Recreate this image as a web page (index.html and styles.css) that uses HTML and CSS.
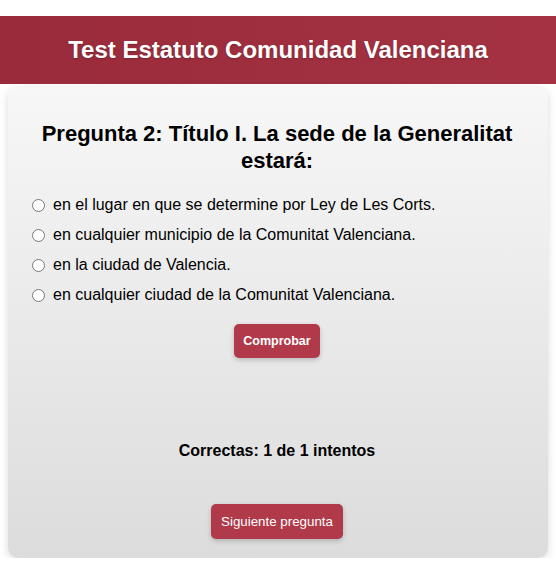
FILE: index.html
```html
<!DOCTYPE html>
<html lang="es">
<head>
<meta charset="utf-8">
<title>Test Estatuto Comunidad Valenciana</title>
<link rel="stylesheet" href="styles.css">
</head>
<body>
<header class="site-header">
  <h1 class="site-title">Test Estatuto Comunidad Valenciana</h1>
</header>
<main class="wrap">
  <section class="card">
    <h2 class="question">Pregunta 2: Título I. La sede de la Generalitat estará:</h2>
    <form class="options">
      <label class="option"><input type="radio" name="r"> en el lugar en que se determine por Ley de Les Corts.</label>
      <label class="option"><input type="radio" name="r"> en cualquier municipio de la Comunitat Valenciana.</label>
      <label class="option"><input type="radio" name="r"> en la ciudad de Valencia.</label>
      <label class="option"><input type="radio" name="r"> en cualquier ciudad de la Comunitat Valenciana.</label>
    </form>
    <button class="btn btn-check" type="button">Comprobar</button>
    <div class="feedback"></div>
    <p class="score">Correctas: 1 de 1 intentos</p>
    <button class="btn btn-next" type="button">Siguiente pregunta</button>
  </section>
</main>
</body>
</html>
```
FILE: styles.css
```css
html, body {
  margin: 0;
  padding: 0;
  background: #ffffff;
  font-family: "Liberation Sans", Arial, sans-serif;
  color: #000;
}
.site-header {
  margin-top: 16px;
  height: 68px;
  background: linear-gradient(90deg, #9a2b3b, #a43242);
  display: flex;
  align-items: center;
  justify-content: center;
}
.site-title {
  margin: 0;
  color: #fff;
  font-size: 24px;
  font-weight: bold;
  text-shadow: 0 1px 2px rgba(0,0,0,0.25);
}
.wrap {
  padding: 3px 8px 0;
}
.card {
  background: linear-gradient(180deg, #f7f7f7, #dcdcdc);
  border-radius: 10px;
  box-shadow: 0 2px 8px rgba(0,0,0,0.15);
  padding: 33px 25px 19px 23px;
  display: flex;
  flex-direction: column;
  align-items: center;
  height: 471px;
  box-sizing: border-box;
}
.question {
  margin: 0;
  font-size: 22px;
  line-height: 27px;
  text-align: center;
  font-weight: bold;
}
.options {
  align-self: stretch;
  margin-top: 16px;
  display: flex;
  flex-direction: column;
}
.option {
  display: flex;
  align-items: center;
  height: 30px;
  font-size: 16px;
}
.option input {
  margin: 0 8px 0 1px;
  width: 13px;
  height: 13px;
}
.btn {
  border: none;
  border-radius: 5px;
  background: #b03a4a;
  color: #fff;
  font-family: "Liberation Sans", Arial, sans-serif;
  box-shadow: 0 2px 5px rgba(0,0,0,0.2);
}
.btn-check {
  margin-top: 14px;
  height: 34px;
  width: 86px;
  padding: 0;
  font-weight: bold;
  font-size: 12.5px;
}
.btn-next {
  height: 35px;
  width: 132px;
  padding: 0;
  font-weight: normal;
  font-size: 13.33px;
}
.feedback {
  height: 84px;
}
.score {
  margin: 0;
  font-size: 16px;
  font-weight: bold;
  height: 62px;
}
```
